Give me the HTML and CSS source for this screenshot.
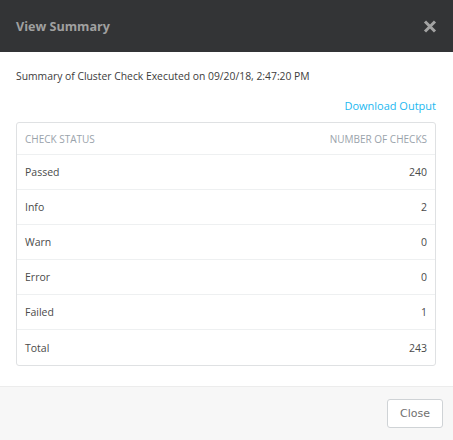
FILE: index.html
```html
<!DOCTYPE html>
<html>
<head>
<meta charset="utf-8">
<link rel="stylesheet" href="styles.css">
</head>
<body>
<div class="modal">
  <div class="modal-header">
    <span class="title">View Summary</span>
    <svg class="close-x" width="14" height="13" viewBox="0 0 14 13"><path d="M2 1.5 L12 11.5 M12 1.5 L2 11.5" stroke="#a3a3a3" stroke-width="3" stroke-linecap="butt"/></svg>
  </div>
  <div class="modal-body">
    <p class="summary">Summary of Cluster Check Executed on 09/20/18, 2:47:20 PM</p>
    <div class="download-row"><a class="download">Download Output</a></div>
    <div class="table">
      <div class="row head"><span>CHECK STATUS</span><span>NUMBER OF CHECKS</span></div>
      <div class="row"><span>Passed</span><span>240</span></div>
      <div class="row"><span>Info</span><span>2</span></div>
      <div class="row"><span>Warn</span><span>0</span></div>
      <div class="row"><span>Error</span><span>0</span></div>
      <div class="row"><span>Failed</span><span>1</span></div>
      <div class="row last"><span>Total</span><span>243</span></div>
    </div>
  </div>
  <div class="modal-footer">
    <button class="btn">Close</button>
  </div>
</div>
</body>
</html>
```
FILE: styles.css
```css
* { box-sizing: border-box; }
html, body { margin: 0; padding: 0; background: #fff; }
body { font-family: "Open Sans", "Liberation Sans", sans-serif; color: #333; }
.modal { width: 453px; height: 440px; display: flex; flex-direction: column; }
.modal-header {
  height: 52px; background: #333436; display: flex; align-items: center;
  justify-content: space-between; padding: 0 16px 0 16px; flex: none;
}
.title { color: #a0a0a0; font-weight: 700; font-size: 12.6px; }
.close-x { display: block; }
.modal-body { padding: 17px 17px 20px 16px; flex: none; }
.summary { margin: 0; font-size: 10.35px; line-height: 15px; color: #3c3c3c; }
.download-row { display: flex; justify-content: flex-end; margin-top: 14px; }
.download { color: #22b8f0; font-size: 11px; line-height: 15px; }
.table { margin-top: 9px; border: 1px solid #dfe1e3; border-radius: 3px; }
.row {
  display: flex; justify-content: space-between; align-items: center;
  height: 35px; padding: 0 8px; border-bottom: 1px solid #eef0f1;
  font-size: 10.5px; color: #4a4a4a;
}
.row.head { height: 32px; font-size: 10px; color: #9aa3ab; }
.row.last { border-bottom: none; }
.modal-footer {
  flex: 1; background: #f7f7f7; border-top: 1px solid #ececec;
  display: flex; justify-content: flex-end; align-items: flex-start; padding: 12px 10px 0 0;
}
.btn {
  width: 56px; height: 29px; border: 1px solid #cfd3d6; border-radius: 3px; background: #fff;
  font-family: "DejaVu Sans", sans-serif; font-size: 11px; color: #707070; padding: 0;
}
```
